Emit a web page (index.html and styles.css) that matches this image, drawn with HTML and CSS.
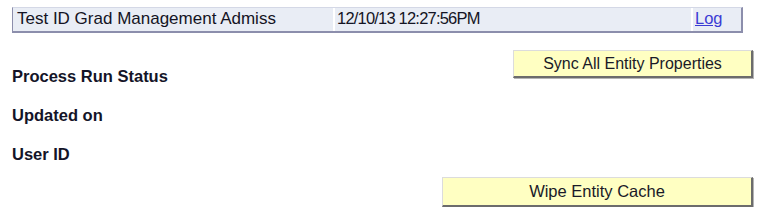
FILE: index.html
```html
<!DOCTYPE html>
<html>
<head>
<meta charset="utf-8">
<link rel="stylesheet" href="styles.css">
</head>
<body>
<div class="header">
  <div class="cell cell-name">Test ID Grad Management Admiss</div>
  <div class="cell cell-date">12/10/13 12:27:56PM</div>
  <div class="cell cell-log"><a href="#" class="log-link">Log</a></div>
</div>
<div class="content">
  <div class="label label-first">Process Run Status</div>
  <button class="btn btn-sync">Sync All Entity Properties</button>
  <div class="label label-row">Updated on</div>
  <div class="label label-row">User ID</div>
  <div class="btn-row">
    <button class="btn btn-wipe">Wipe Entity Cache</button>
  </div>
</div>
</body>
</html>
```
FILE: styles.css
```css
html, body {
  margin: 0;
  padding: 0;
  background: #ffffff;
}
body {
  font-family: "Liberation Sans", Arial, sans-serif;
  color: #1a1a2a;
}
.header {
  display: flex;
  gap: 2px;
  margin: 7px 0 0 12px;
  width: 731px;
  box-sizing: border-box;
  border-top: 1px solid #d4d8e6;
  border-left: 1px solid #8c8eac;
  border-right: 2px solid #8c8eac;
  border-bottom: 2px solid #8c8eac;
  background: #ffffff;
}
.cell {
  background: #e9edf5;
  height: 23px;
  box-sizing: border-box;
  padding-top: 1px;
  font-size: 17px;
  line-height: 19px;
  white-space: nowrap;
  overflow: hidden;
  color: #141424;
}
.cell-name {
  width: 320px;
  padding-left: 4px;
}
.cell-date {
  width: 356px;
  padding-left: 2px;
  font-size: 16.5px;
  letter-spacing: -0.8px;
}
.cell-log {
  width: 48px;
  padding-left: 2px;
  font-size: 16.5px;
}
.log-link {
  color: #3b3bd4;
  text-decoration: underline;
}
.content {
  display: grid;
  grid-template-columns: 1fr auto;
  margin: 17px 24px 0 12px;
}
.label {
  grid-column: 1;
  font-weight: bold;
  font-size: 16.5px;
  line-height: 20px;
  color: #141428;
}
.label-first {
  margin-top: 16px;
}
.label-row {
  grid-column: 1 / span 2;
  margin-top: 19px;
}
.btn {
  font-family: "Liberation Sans", Arial, sans-serif;
  font-size: 16px;
  color: #1a1a28;
  background: #ffffc2;
  border-style: solid;
  border-width: 1px 2px 2px 1px;
  border-color: #dcdcdc #6c6c6c #6c6c6c #dcdcdc;
  box-shadow: 1px 1px 0 #b4b4b4;
  padding: 0;
  margin: 0;
  box-sizing: border-box;
  cursor: pointer;
}
.btn-sync {
  grid-column: 2;
  grid-row: 1;
  align-self: start;
  width: 240px;
  height: 28px;
}
.btn-row {
  grid-column: 1 / span 2;
  display: flex;
  justify-content: flex-end;
  margin-top: 13px;
}
.btn-wipe {
  width: 311px;
  height: 30px;
  font-size: 16.5px;
}
```
